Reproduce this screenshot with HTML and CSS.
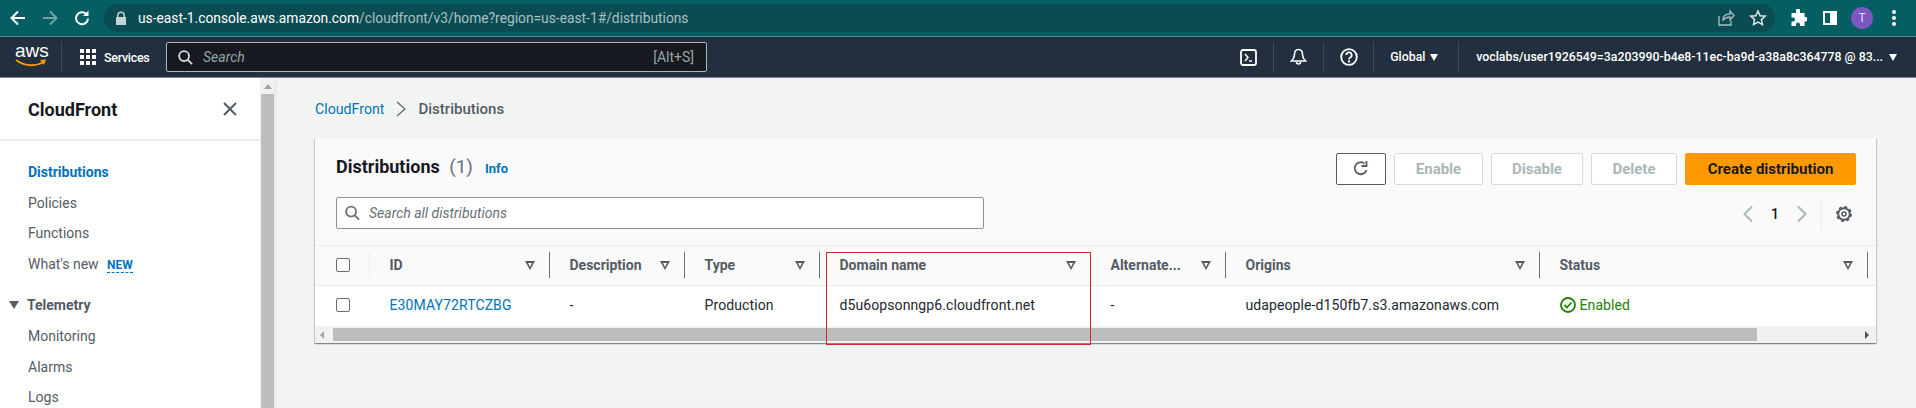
FILE: index.html
```html
<!DOCTYPE html>
<html>
<head>
    <title>Distributions | CloudFront</title>
    <link rel="stylesheet" href="styles.css">
</head>
<body>
    <div class="browser-bar">
        <svg class="br-icon" width="20" height="20" viewBox="0 0 20 20"><path d="M17 10H4M10 3.500L3.500 10l6.500 6.500" fill="none" stroke="#fff" stroke-width="2"/></svg>
        <svg class="br-icon" width="20" height="20" viewBox="0 0 20 20"><path d="M3 10h13M10 3.500l6.500 6.500-6.500 6.500" fill="none" stroke="#6fa3a5" stroke-width="2"/></svg>
        <svg class="br-icon" width="20" height="20" viewBox="0 0 20 20"><path d="M16 10.500a6 6 0 1 1-1.800-4.600" fill="none" stroke="#fff" stroke-width="2"/><path d="M16.500 2.500v5.500H11z" fill="#fff"/></svg>
        <div class="address">
            <svg width="12" height="14" viewBox="0 0 12 14"><path d="M2 6V4.500a4 4 0 0 1 8 0V6h1v8H1V6zm1.500 0h5V4.500a2.500 2.500 0 0 0-5 0z" fill="#c4d2d3"/></svg>
            <span class="url"><b>us-east-1.console.aws.amazon.com</b>/cloudfront/v3/home?region=us-east-1#/distributions</span>
            <svg class="addr-share" width="18" height="18" viewBox="0 0 18 18"><path d="M2 7v9h12v-4M6 11c0-4 3-6 7-6V2l4 4.500L13 11V8c-3 0-5 1-7 3z" fill="none" stroke="#a9c0c2" stroke-width="1.300"/></svg>
            <svg width="18" height="18" viewBox="0 0 18 18"><path d="M9 2l2.100 4.700 5.100.5-3.800 3.400 1.100 5L9 13l-4.500 2.600 1.100-5-3.800-3.400 5.100-.5z" fill="none" stroke="#dfe9e9" stroke-width="1.500"/></svg>
        </div>
        <div class="browser-actions">
            <svg class="ext-icon" width="18" height="18" viewBox="0 0 18 18"><path d="M7 1.500a2 2 0 0 1 4 0V4h4.500v4H17a2.300 2.300 0 0 1 0 4.500h-1.500V17H11v-1.500a2 2 0 0 0-4 0V17H2.500v-4.500H4a2 2 0 0 0 0-4H2.500V4H7z" fill="#fff"/></svg>
            <svg class="panel-icon" width="14" height="14" viewBox="0 0 14 14"><path d="M0 0h14v14H0zm2 2v10h5V2z" fill="#fff" fill-rule="evenodd"/></svg>
            <span class="avatar">T</span>
            <svg class="dots" width="4" height="16" viewBox="0 0 4 16"><circle cx="2" cy="2" r="2" fill="#fff"/><circle cx="2" cy="8" r="2" fill="#fff"/><circle cx="2" cy="14" r="2" fill="#fff"/></svg>
        </div>
    </div>

    <div class="topnav">
        <div class="aws-logo">
            <span>aws</span>
            <svg width="32" height="9" viewBox="0 0 32 9"><path d="M1 1c8 6 19 7 28 2" fill="none" stroke="#f90" stroke-width="2"/><path d="M25 1l6-.5-2 5.500z" fill="#f90"/></svg>
        </div>
        <div class="services">
            <svg width="16" height="16" viewBox="0 0 16 16" fill="#fff"><rect width="4" height="4"/><rect x="6" width="4" height="4"/><rect x="12" width="4" height="4"/><rect y="6" width="4" height="4"/><rect x="6" y="6" width="4" height="4"/><rect x="12" y="6" width="4" height="4"/><rect y="12" width="4" height="4"/><rect x="6" y="12" width="4" height="4"/><rect x="12" y="12" width="4" height="4"/></svg>
            <span>Services</span>
        </div>
        <div class="nav-search">
            <svg width="15" height="15" viewBox="0 0 16 16"><circle cx="6.500" cy="6.500" r="5.300" fill="none" stroke="#d5dbdb" stroke-width="2"/><path d="M10.500 10.500L15 15" stroke="#d5dbdb" stroke-width="2"/></svg>
            <span class="nav-search-text">Search</span>
            <span class="nav-search-key">[Alt+S]</span>
        </div>
        <div class="nav-right">
            <div class="nav-item icon-item">
                <svg width="17" height="17" viewBox="0 0 17 17"><rect x="1" y="1" width="15" height="15" rx="2" fill="none" stroke="#fff" stroke-width="1.800"/><path d="M5 5l3 3.500L5 12M9 12h3" fill="none" stroke="#fff" stroke-width="1.500"/></svg>
            </div>
            <div class="nav-item icon-item">
                <svg width="17" height="18" viewBox="0 0 17 18"><path d="M8.500 1.500c-3 0-4 2.500-4 5 0 3-1 4.500-3 6.500h14c-2-2-3-3.500-3-6.500 0-2.500-1-5-4-5zM6.500 14a2 2 0 0 0 4 0" fill="none" stroke="#fff" stroke-width="1.600"/></svg>
            </div>
            <div class="nav-item icon-item">
                <svg width="18" height="18" viewBox="0 0 18 18"><circle cx="9" cy="9" r="7.800" fill="none" stroke="#fff" stroke-width="1.800"/><path d="M6.300 7a2.700 2.700 0 1 1 4 2.400c-.9.500-1.300 1-1.300 2" fill="none" stroke="#fff" stroke-width="1.700"/><rect x="8" y="12.500" width="2" height="2" fill="#fff"/></svg>
            </div>
            <div class="nav-item region">Global <i class="nav-caret"></i></div>
            <div class="nav-item account">voclabs/user1926549=3a203990-b4e8-11ec-ba9d-a38a8c364778 @ 83... <i class="nav-caret"></i></div>
        </div>
    </div>

    <div class="layout">
        <aside class="sidebar">
            <div class="side-head">
                <span class="side-title">CloudFront</span>
                <svg width="16" height="16" viewBox="0 0 16 16"><path d="M2 2l12 12M14 2L2 14" stroke="#545b64" stroke-width="2"/></svg>
            </div>
            <ul class="side-list">
                <li class="active">Distributions</li>
                <li>Policies</li>
                <li>Functions</li>
                <li>What's new <span class="new-tag">NEW</span></li>
            </ul>
            <div class="side-section"><i class="side-caret"></i>Telemetry</div>
            <ul class="side-list sub">
                <li>Monitoring</li>
                <li>Alarms</li>
                <li>Logs</li>
            </ul>
        </aside>
        <div class="side-scroll"><i class="scroll-up"></i><div class="scroll-thumb"></div></div>

        <main class="content">
            <div class="crumbs">
                <a class="link">CloudFront</a>
                <svg width="10" height="16" viewBox="0 0 10 16"><path d="M1 1l8 7-8 7" fill="none" stroke="#687078" stroke-width="1.500"/></svg>
                <span>Distributions</span>
            </div>

            <section class="card">
                <div class="card-head">
                    <div class="head-left">
                        <div class="title-row">
                            <h1>Distributions <span class="count">(1)</span></h1>
                            <a class="info">Info</a>
                        </div>
                        <div class="table-search">
                            <svg width="15" height="16" viewBox="0 0 16 16"><circle cx="6.500" cy="6.500" r="5.300" fill="none" stroke="#687078" stroke-width="2"/><path d="M10.500 10.500L15 15" stroke="#687078" stroke-width="2"/></svg>
                            <span>Search all distributions</span>
                        </div>
                    </div>
                    <div class="head-right">
                        <div class="actions">
                            <button class="btn refresh"><svg width="18" height="18" viewBox="0 0 18 18"><path d="M14.500 10a6 6 0 1 1-2-6.500" fill="none" stroke="#545b64" stroke-width="1.800"/><path d="M14.500 1v5h-5" fill="none" stroke="#545b64" stroke-width="1.800"/></svg></button>
                            <button class="btn off btn-enable">Enable</button>
                            <button class="btn off btn-disable">Disable</button>
                            <button class="btn off btn-delete">Delete</button>
                            <button class="btn primary">Create distribution</button>
                        </div>
                        <div class="pager">
                            <svg width="10" height="18" viewBox="0 0 10 18"><path d="M9 1.500L1.500 9 9 16.500" fill="none" stroke="#aab7b8" stroke-width="2"/></svg>
                            <span class="page-no">1</span>
                            <svg width="10" height="18" viewBox="0 0 10 18"><path d="M1 1.500L8.500 9 1 16.500" fill="none" stroke="#aab7b8" stroke-width="2"/></svg>
                            <span class="pager-sep"></span>
                            <svg width="16" height="16" viewBox="0 0 16 16"><circle cx="8" cy="8" r="5.800" fill="none" stroke="#545b64" stroke-width="2"/><circle cx="8" cy="8" r="7" fill="none" stroke="#545b64" stroke-width="2" stroke-dasharray="3 2.500"/><circle cx="8" cy="8" r="2" fill="none" stroke="#545b64" stroke-width="1.600"/></svg>
                        </div>
                    </div>
                </div>

                <table class="dist-table">
                    <colgroup>
                        <col class="c-check"><col class="c-id"><col class="c-desc"><col class="c-type"><col class="c-domain"><col class="c-alt"><col class="c-origin"><col class="c-status"><col>
                    </colgroup>
                    <thead>
                        <tr>
                            <th class="check-cell"><div class="cell-in first"><i class="box"></i></div></th>
                            <th><div class="cell-in"><span>ID</span><i class="filter"></i></div></th>
                            <th><div class="cell-in"><span>Description</span><i class="filter"></i></div></th>
                            <th><div class="cell-in"><span>Type</span><i class="filter"></i></div></th>
                            <th><div class="cell-in"><span>Domain name</span><i class="filter"></i></div></th>
                            <th><div class="cell-in"><span>Alternate...</span><i class="filter"></i></div></th>
                            <th><div class="cell-in"><span>Origins</span><i class="filter"></i></div></th>
                            <th><div class="cell-in"><span>Status</span><i class="filter"></i></div></th>
                            <th></th>
                        </tr>
                    </thead>
                    <tbody>
                        <tr>
                            <td class="check-cell"><i class="box"></i></td>
                            <td><a class="link">E30MAY72RTCZBG</a></td>
                            <td>-</td>
                            <td>Production</td>
                            <td>d5u6opsonngp6.cloudfront.net</td>
                            <td>-</td>
                            <td>udapeople-d150fb7.s3.amazonaws.com</td>
                            <td><span class="status"><svg width="16" height="16" viewBox="0 0 16 16"><circle cx="8" cy="8" r="7" fill="none" stroke="#1d8102" stroke-width="1.800"/><path d="M4.500 8l2.500 2.500 4.500-5" fill="none" stroke="#1d8102" stroke-width="1.800"/></svg>Enabled</span></td>
                            <td></td>
                        </tr>
                    </tbody>
                </table>

                <div class="h-scroll">
                    <i class="arrow-left"></i>
                    <div class="h-thumb"></div>
                    <i class="arrow-right"></i>
                </div>

                <div class="red-box"></div>
            </section>
        </main>
    </div>
</body>
</html>
```

FILE: styles.css
```css
* {
    box-sizing: border-box;
}
html, body {
    margin: 0;
    height: 408px;
    overflow: hidden;
}
body {
    font-family: Roboto, "Noto Sans", sans-serif;
    font-size: 14px;
    color: #16191f;
    background-color: #f2f3f3;
    display: flex;
    flex-direction: column;
}
.link {
    color: #0073bb;
}

/* browser chrome */
.browser-bar {
    height: 37px;
    flex-shrink: 0;
    background-color: #045e62;
    border-bottom: 1px solid #4c8f90;
    display: flex;
    align-items: center;
    padding-left: 8px;
}
.br-icon {
    margin-right: 12px;
}
.address {
    width: 1671px;
    height: 28px;
    padding: 0 8px 0 11px;
    border-radius: 14px;
    background-color: #0b4c53;
    display: flex;
    align-items: center;
}
.url {
    flex: 1;
    margin-left: 11px;
    font-size: 13.800px;
    color: #a9c0c2;
}
.url b {
    font-weight: 400;
    color: #fff;
}
.addr-share {
    margin-right: 14px;
}
.browser-actions {
    flex: 1;
    display: flex;
    align-items: center;
    padding-left: 14px;
}
.panel-icon {
    margin-left: 16px;
}
.avatar {
    width: 22px;
    height: 22px;
    margin-left: 14px;
    border-radius: 50%;
    background-color: #7e57c2;
    color: #e6dcf5;
    font-size: 12px;
    display: flex;
    align-items: center;
    justify-content: center;
}
.dots {
    margin-left: 19px;
}

/* aws top nav */
.topnav {
    height: 41px;
    flex-shrink: 0;
    background-color: #232f3e;
    border-bottom: 1px solid #7d8998;
    color: #fff;
    display: flex;
    align-items: center;
    padding-left: 15px;
}
.aws-logo {
    width: 47px;
    height: 30px;
    border-right: 1px solid #414750;
    font-family: "Liberation Sans", sans-serif;
    font-size: 19px;
    line-height: 18px;
    display: flex;
    flex-direction: column;
}
.aws-logo svg {
    margin-top: -1px;
}
.services {
    display: flex;
    align-items: center;
    gap: 8px;
    margin-left: 18px;
    width: 86px;
    font-size: 12.500px;
    letter-spacing: -0.300px;
    font-weight: 500;
}
.nav-search {
    width: 541px;
    height: 30px;
    padding: 0 12px 0 11px;
    background-color: #16191f;
    border: 1px solid #aab7b8;
    border-radius: 2px;
    display: flex;
    align-items: center;
    gap: 10px;
    color: #95a5a6;
}
.nav-search-text {
    flex: 1;
    font-style: italic;
}
.nav-right {
    margin-left: auto;
    display: flex;
    align-items: center;
    padding-right: 19px;
}
.nav-item {
    height: 30px;
    display: flex;
    align-items: center;
    font-size: 12.350px;
    font-weight: 500;
}
.icon-item {
    width: 50px;
    justify-content: center;
    border-right: 1px solid #414750;
}
.region {
    width: 85px;
    padding-left: 16px;
    gap: 5px;
    border-right: 1px solid #414750;
}
.account {
    padding-left: 17px;
    gap: 6px;
}
.nav-caret {
    width: 0;
    height: 0;
    border-left: 4px solid transparent;
    border-right: 4px solid transparent;
    border-top: 7px solid #fff;
}

.layout {
    flex: 1;
    display: flex;
    min-height: 0;
}

/* side navigation */
.sidebar {
    width: 260px;
    flex-shrink: 0;
    background-color: #fff;
}
.side-head {
    height: 63px;
    padding: 1px 22px 0 28px;
    border-bottom: 2px solid #eaeded;
    display: flex;
    align-items: center;
    justify-content: space-between;
}
.side-title {
    font-size: 18px;
    font-weight: 700;
}
.side-list {
    list-style: none;
    margin: 0;
    padding: 16px 0 0 28px;
}
.side-list li {
    height: 30.500px;
    line-height: 30px;
    color: #545b64;
}
.side-list .active {
    color: #0073bb;
    font-weight: 700;
}
.new-tag {
    margin-left: 5px;
    font-size: 12px;
    font-weight: 700;
    color: #0073bb;
    border-bottom: 1px dashed #0073bb;
}
.side-section {
    margin-top: 11px;
    padding-left: 9px;
    height: 30px;
    line-height: 30px;
    font-weight: 700;
    color: #545b64;
    display: flex;
    align-items: center;
}
.side-caret {
    width: 0;
    height: 0;
    margin-right: 8px;
    border-left: 5px solid transparent;
    border-right: 5px solid transparent;
    border-top: 8px solid #545b64;
}
.side-list.sub {
    padding-top: 1px;
}
.side-scroll {
    width: 17px;
    flex-shrink: 0;
    background-color: #f1f1f1;
    border-right: 3px solid #eaeded;
    padding-left: 1px;
    display: flex;
    flex-direction: column;
    align-items: center;
}
.scroll-up {
    width: 0;
    height: 0;
    margin: 6px 0 5px;
    border-left: 4px solid transparent;
    border-right: 4px solid transparent;
    border-bottom: 5px solid #a3a3a3;
}
.scroll-thumb {
    width: 100%;
    flex: 1;
    background-color: #bdbdbd;
}

/* main content */
.content {
    flex: 1;
    min-width: 0;
    padding: 0 40px 0 38px;
}
.crumbs {
    height: 60px;
    padding-top: 1px;
    display: flex;
    align-items: center;
    gap: 11px;
    color: #545b64;
    font-size: 15px;
    font-weight: 500;
}
.crumbs .link {
    font-size: 14.200px;
    font-weight: 400;
}
.crumbs span {
    margin-left: 2px;
}
.card {
    position: relative;
    background-color: #fff;
    box-shadow: 0 1px 1px 0 rgba(0, 28, 36, 0.3), 1px 1px 1px 0 rgba(0, 28, 36, 0.15), -1px 1px 1px 0 rgba(0, 28, 36, 0.15);
}
.card-head {
    height: 108px;
    padding: 15px 20px 0 21px;
    background-color: #fafafa;
    border-bottom: 1px solid #eaeded;
    display: flex;
    justify-content: space-between;
}
.head-left {
    margin-top: -1px;
}
.title-row {
    display: flex;
    align-items: baseline;
    gap: 12px;
    height: 45px;
}
.title-row h1 {
    margin: 0;
    font-size: 18px;
    font-weight: 700;
    line-height: 30px;
}
.count {
    margin-left: 5px;
    font-size: 19px;
    font-weight: 400;
    color: #687078;
}
.info {
    font-size: 13px;
    font-weight: 700;
    color: #0073bb;
}
.table-search {
    width: 648px;
    height: 32px;
    padding: 0 8px;
    background-color: #fff;
    border: 1px solid #879596;
    border-radius: 2px;
    display: flex;
    align-items: center;
    gap: 9px;
    color: #687078;
    font-style: italic;
}
.head-right {
    display: flex;
    flex-direction: column;
    align-items: flex-end;
}
.actions {
    display: flex;
    gap: 8px;
}
.btn {
    height: 32px;
    padding: 0;
    border: 1px solid #d5dbdb;
    border-radius: 2px;
    background-color: #fff;
    font-family: inherit;
    font-size: 15px;
    font-weight: 700;
    color: #aab7b8;
    display: flex;
    align-items: center;
    justify-content: center;
}
.refresh {
    width: 50px;
    border-color: #545b64;
}
.btn-enable {
    width: 89px;
}
.btn-disable {
    width: 92px;
}
.btn-delete {
    width: 86px;
}
.primary {
    width: 171px;
    background-color: #ff9900;
    border-color: #ff9900;
    color: #16191f;
}
.pager {
    height: 34px;
    margin-top: 12px;
    padding-right: 4px;
    display: flex;
    align-items: center;
}
.page-no {
    margin: 0 18px;
    color: #16191f;
    font-weight: 500;
}
.pager-sep {
    height: 34px;
    margin: 0 14px;
    border-left: 1px solid #eaeded;
}

/* table */
.dist-table {
    width: 100%;
    table-layout: fixed;
    border-collapse: collapse;
}
.c-check {
    width: 55px;
}
.c-id {
    width: 180px;
}
.c-desc {
    width: 135px;
}
.c-type {
    width: 135px;
}
.c-domain {
    width: 271px;
}
.c-alt {
    width: 135px;
}
.c-origin {
    width: 314px;
}
.c-status {
    width: 328px;
}
.dist-table th {
    height: 39px;
    padding: 0;
    background-color: #fafafa;
    border-bottom: 1px solid #eaeded;
    text-align: left;
    font-weight: 700;
    color: #545b64;
}
.cell-in {
    height: 26px;
    padding: 0 14px 0 19.500px;
    border-right: 1px solid #687078;
    display: flex;
    align-items: center;
    justify-content: space-between;
}
.cell-in.first {
    padding-left: 21px;
    border-right-color: #eaeded;
}
.filter {
    width: 0;
    height: 0;
    border-left: 5px solid transparent;
    border-right: 5px solid transparent;
    border-top: 9px solid #545b64;
    position: relative;
}
.filter::after {
    content: "";
    position: absolute;
    left: -2px;
    top: -7px;
    border-left: 2px solid transparent;
    border-right: 2px solid transparent;
    border-top: 4px solid #fafafa;
}
.box {
    display: block;
    width: 14px;
    height: 14px;
    background-color: #fff;
    border: 1px solid #687078;
    border-radius: 2px;
}
.dist-table td {
    height: 41px;
    padding: 0 0 2px 19.500px;
    color: #232830;
    letter-spacing: 0.100px;
}
.dist-table td.check-cell {
    padding-left: 21px;
}
.dist-table td .link {
    color: #0073bb;
}
.status {
    display: flex;
    align-items: center;
    gap: 4px;
    color: #1d8102;
}
.h-scroll {
    height: 17px;
    background-color: #f1f1f1;
    display: flex;
    align-items: center;
    padding: 0 5px;
}
.arrow-left {
    width: 0;
    height: 0;
    border-top: 4px solid transparent;
    border-bottom: 4px solid transparent;
    border-right: 4px solid #a3a3a3;
}
.h-thumb {
    width: 1424px;
    height: 13px;
    margin-left: 9px;
    background-color: #bdbdbd;
}
.arrow-right {
    width: 0;
    height: 0;
    margin-left: auto;
    margin-right: 2px;
    border-top: 4px solid transparent;
    border-bottom: 4px solid transparent;
    border-left: 4px solid #505050;
}
.red-box {
    position: absolute;
    left: 511px;
    top: 114px;
    width: 265px;
    height: 93px;
    border: 1px solid #d9232e;
}
```
